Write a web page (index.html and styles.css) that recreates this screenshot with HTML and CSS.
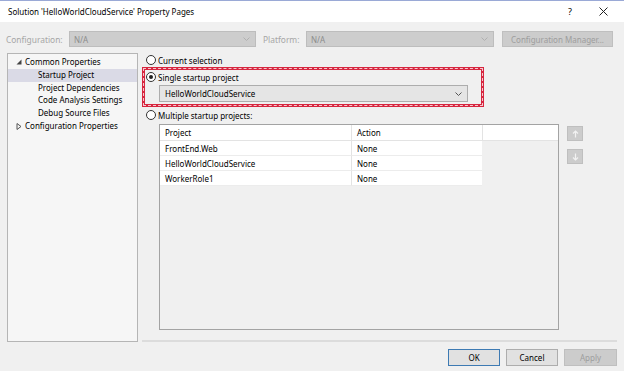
FILE: index.html
```html
<!DOCTYPE html>
<html>
<head>
<meta charset="utf-8">
<link rel="stylesheet" href="styles.css">
</head>
<body>
<div class="dialog">
  <div class="titlebar">
    <span class="title">Solution 'HelloWorldCloudService' Property Pages</span>
    <span class="help">?</span>
    <svg class="close" width="9" height="9" viewBox="0 0 9 9"><path d="M0.5 0.5 L8.5 8.5 M8.5 0.5 L0.5 8.5" stroke="#222" stroke-width="1" fill="none"/></svg>
  </div>

  <div class="config">
    <span class="lbl lbl-conf">Configuration:</span>
    <div class="combo combo-dis combo-conf"><span>N/A</span><svg class="chev" width="7" height="4" viewBox="0 0 7 4"><polyline points="0.5,0.5 3.5,3.5 6.5,0.5" fill="none" stroke="#b0b0b0" stroke-width="1"/></svg></div>
    <span class="lbl lbl-plat">Platform:</span>
    <div class="combo combo-dis combo-plat"><span>N/A</span><svg class="chev" width="7" height="4" viewBox="0 0 7 4"><polyline points="0.5,0.5 3.5,3.5 6.5,0.5" fill="none" stroke="#b0b0b0" stroke-width="1"/></svg></div>
    <div class="btn btn-dis btn-cm">Configuration Manager...</div>
  </div>

  <div class="main">
    <div class="tree">
      <div class="node"><svg class="tri" width="6" height="6" viewBox="0 0 6 6"><polygon points="5.5,0.5 5.5,5.5 0.5,5.5" fill="#444"/></svg>Common Properties</div>
      <div class="node child sel">Startup Project</div>
      <div class="node child">Project Dependencies</div>
      <div class="node child">Code Analysis Settings</div>
      <div class="node child">Debug Source Files</div>
      <div class="node"><svg class="tri" width="6" height="7" viewBox="0 0 6 7"><polygon points="1,0.5 5,3.5 1,6.5" fill="none" stroke="#555" stroke-width="1"/></svg>Configuration Properties</div>
    </div>

    <div class="panel">
      <div class="radio-row"><span class="radio"></span>Current selection</div>
      <div class="mark">
        <div class="radio-row"><span class="radio checked"></span>Single startup project</div>
        <div class="combo combo-proj"><span>HelloWorldCloudService</span><svg class="chev" width="7" height="4" viewBox="0 0 7 4"><polyline points="0.5,0.5 3.5,3.5 6.5,0.5" fill="none" stroke="#555" stroke-width="1"/></svg></div>
      </div>
      <div class="radio-row"><span class="radio"></span>Multiple startup projects:</div>

      <div class="list-area">
        <div class="grid">
          <div class="grow ghead">
            <div class="cell c-proj">Project</div>
            <div class="cell c-act">Action</div>
            <div class="cell c-rest"></div>
          </div>
          <div class="grow">
            <div class="cell c-proj">FrontEnd.Web</div>
            <div class="cell c-act">None</div>
          </div>
          <div class="grow">
            <div class="cell c-proj">HelloWorldCloudService</div>
            <div class="cell c-act">None</div>
          </div>
          <div class="grow">
            <div class="cell c-proj">WorkerRole1</div>
            <div class="cell c-act">None</div>
          </div>
        </div>
        <div class="updown">
          <div class="ud"><svg width="7" height="8" viewBox="0 0 7 8"><path d="M3.5 1 V7.5 M1 3.5 L3.5 1 L6 3.5" fill="none" stroke="#f2f2f2" stroke-width="1.2"/></svg></div>
          <div class="ud ud-down"><svg width="7" height="8" viewBox="0 0 7 8"><path d="M3.5 0.5 V7 M1 4.5 L3.5 7 L6 4.5" fill="none" stroke="#f2f2f2" stroke-width="1.2"/></svg></div>
        </div>
      </div>
    </div>
  </div>

  <div class="footer">
    <div class="btn btn-ok">OK</div>
    <div class="btn">Cancel</div>
    <div class="btn btn-dis btn-apply">Apply</div>
  </div>
</div>
</body>
</html>
```

FILE: styles.css
```css
* { box-sizing: border-box; }
html, body {
  margin: 0;
  padding: 0;
}
body {
  width: 624px;
  height: 371px;
  overflow: hidden;
  background: #f0f0f0;
  font-family: "Noto Sans", "Open Sans", sans-serif;
  font-size: 8px;
  color: #000;
}
.dialog {
  width: 624px;
  height: 371px;
  background: #f0f0f0;
}

/* title bar */
.titlebar {
  height: 22px;
  background: #fff;
  border-top: 1px solid #9aa9d6;
  display: flex;
  align-items: center;
  padding-left: 8px;
}
.title { flex: 1; font-size: 8px; }
.help { width: 10px; margin-right: 21px; font-size: 9px; }
.close { margin-right: 16px; }

/* configuration row */
.config {
  display: flex;
  align-items: center;
  height: 31px;
  padding: 9px 0 6px 6px;
}
.lbl { color: #a6a6a6; font-size: 8.4px; }
.lbl-conf { width: 63px; }
.lbl-plat { width: 43px; margin-left: 7px; }
.combo {
  height: 16px;
  display: flex;
  align-items: center;
  justify-content: space-between;
  padding: 0 5px 0 4px;
  border: 1px solid #bdbdbd;
}
.combo-dis { background: #cdcdcd; color: #8c8c8c; }
.combo-conf { width: 187px; }
.combo-plat { width: 188px; }
.btn {
  height: 17px;
  width: 52px;
  display: flex;
  align-items: center;
  justify-content: center;
  background: #e1e1e1;
  border: 1px solid #adadad;
}
.btn-dis { background: #cccccc; border-color: #bfbfbf; color: #9d9d9d; }
.btn-cm { width: 111px; height: 16px; margin-left: 8px; }

/* main area */
.main {
  display: flex;
  height: 289px;
  padding-left: 7px;
}
.tree {
  width: 131px;
  height: 289px;
  background: #f6f6f6;
  border: 1px solid #b5b5b5;
  padding-top: 2px;
}
.node {
  height: 12.75px;
  line-height: 12.75px;
  display: flex;
  align-items: center;
  padding-left: 8px;
  white-space: nowrap;
}
.tri { margin-right: 3px; flex: none; }
.node.child { padding-left: 30px; }
.node.sel { background: #dadae6; }

.panel {
  width: 475px;
  height: 289px;
  margin-left: 4px;
  border-bottom: 2px solid #dcdcdc;
}
.radio-row {
  height: 14px;
  display: flex;
  align-items: center;
  padding-left: 4px;
  white-space: nowrap;
}
.radio {
  width: 10px;
  height: 10px;
  border-radius: 50%;
  border: 1px solid #333;
  background: #fff;
  margin-right: 2px;
  position: relative;
  flex: none;
}
.radio.checked::after {
  content: "";
  position: absolute;
  left: 2px;
  top: 2px;
  width: 4px;
  height: 4px;
  border-radius: 50%;
  background: #222;
}

.mark {
  width: 342px;
  height: 40px;
  border: 3px solid #d7263f;
  position: relative;
}
.mark::after {
  content: "";
  position: absolute;
  left: -2px;
  top: -2px;
  right: -2px;
  bottom: -2px;
  border: 1px dashed rgba(255, 255, 255, 0.75);
  pointer-events: none;
}
.mark .radio-row { padding-left: 1px; height: 14px; }
.combo-proj {
  width: 309px;
  height: 17px;
  margin: 1px 0 0 14px;
  background: #e5e5e5;
  border-color: #adadad;
  padding-left: 5px;
}

.panel > .radio-row:nth-child(3) { margin-top: 1px; }

.list-area {
  display: flex;
  margin-top: 2px;
  padding-left: 17px;
}
.grid {
  width: 400px;
  height: 206px;
  border: 1px solid #a3a3a3;
  background: #f0f0f0;
}
.grow {
  display: flex;
  height: 15px;
}
.ghead { height: 16px; }
.cell {
  display: flex;
  align-items: center;
  padding-left: 5px;
  background: #fff;
  border-bottom: 1px solid #ececec;
  white-space: nowrap;
}
.c-proj { width: 192px; border-right: 1px solid #e3e3e3; }
.c-act { width: 130px; }
.c-rest { flex: 1; border-left: 1px solid #e3e3e3; }
.ghead .cell { border-bottom: 1px solid #e3e3e3; }

.updown {
  margin-left: 8px;
  padding-top: 2px;
  display: flex;
  flex-direction: column;
  gap: 8px;
}
.ud {
  width: 16px;
  height: 15px;
  background: #cccccc;
  border: 1px solid #bfbfbf;
  display: flex;
  align-items: center;
  justify-content: center;
}

/* footer */
.footer {
  display: flex;
  justify-content: flex-end;
  gap: 6px;
  padding: 7px 7px 0 0;
}
.btn-ok { border-color: #3d7ab3; }
.btn-apply { width: 53px; }
```
